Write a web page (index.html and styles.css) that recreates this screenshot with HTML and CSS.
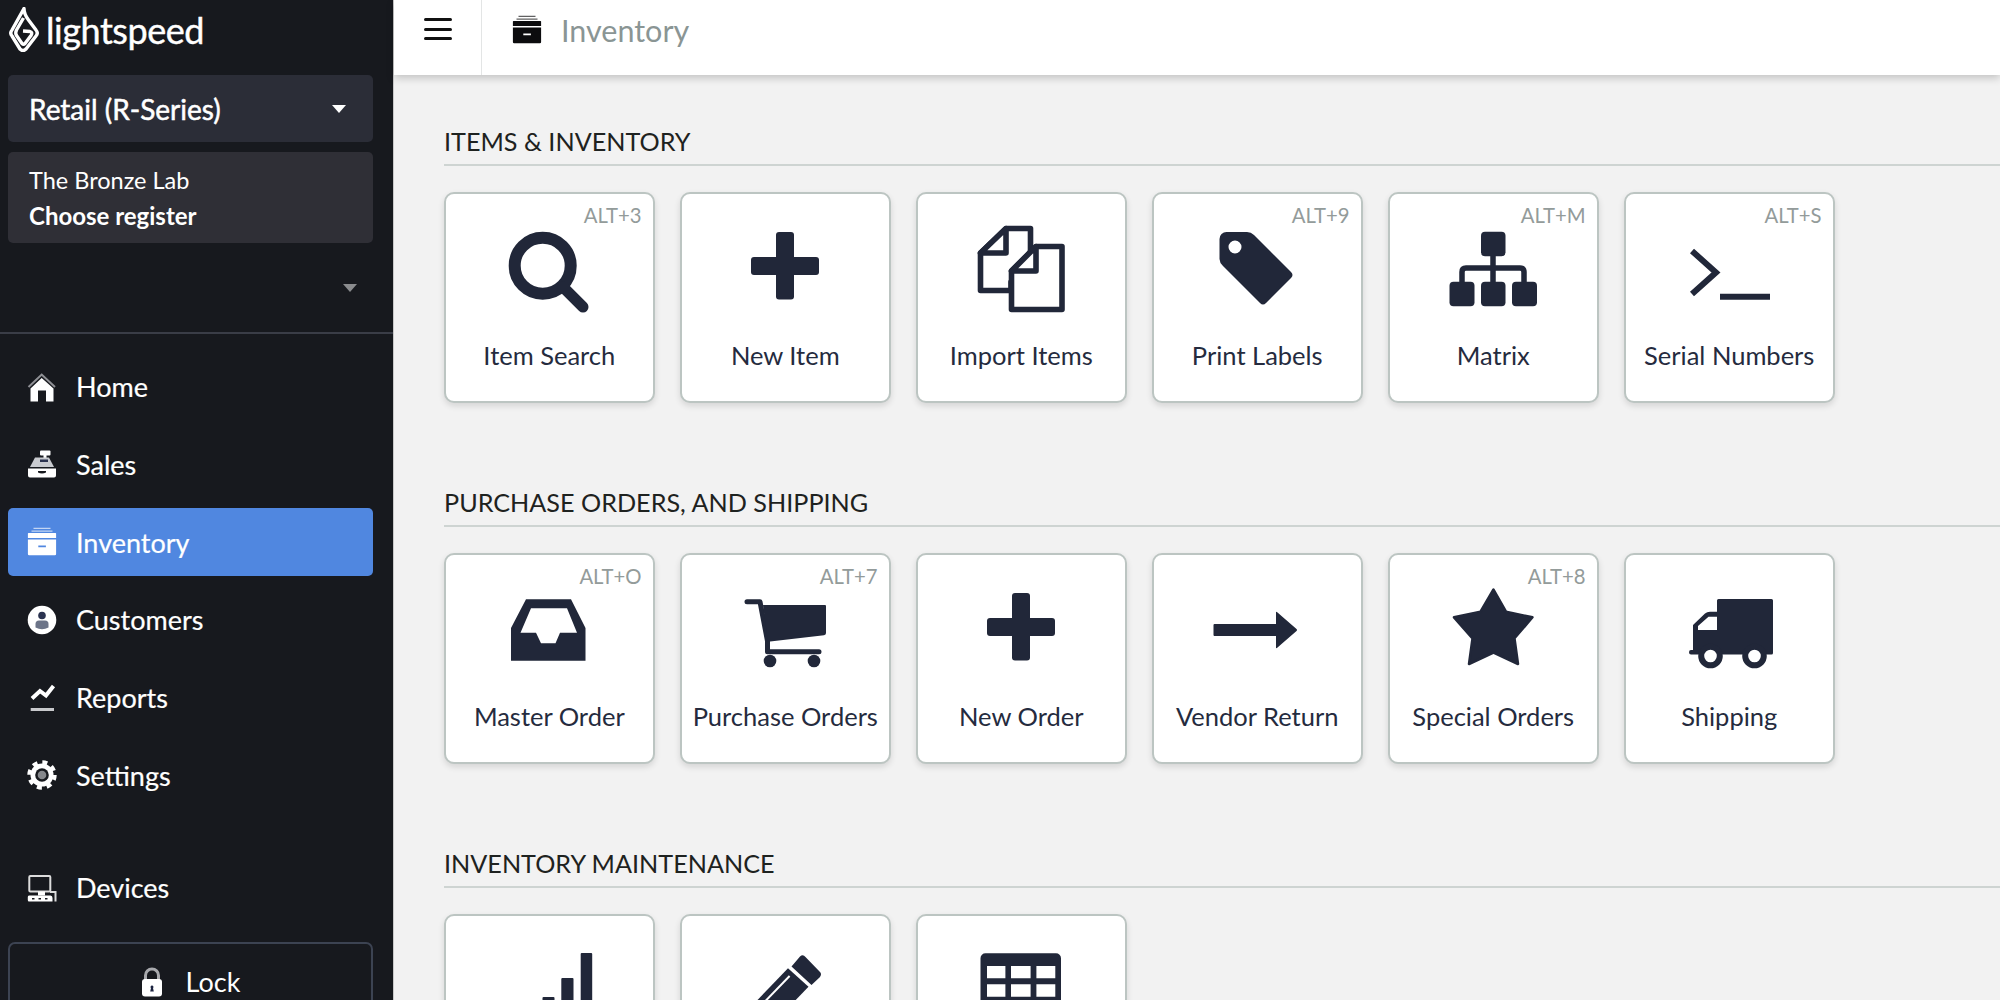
FILE: index.html
```html
<!DOCTYPE html>
<html lang="en">
<head>
    <meta charset="UTF-8">
    <title>Inventory</title>
    <link rel="stylesheet" href="styles.css">
</head>
<body>

<svg class="defs" width="0" height="0">
    <symbol id="i-box" viewBox="0 0 30 30">
        <path d="M6.5 .8h17v1.2h-17zM4.5 3.6h21v1.2h-21z" opacity=".65"/>
        <path d="M1.5 6h27a.6.6 0 0 1 .6.6V11H.9V6.6a.6.6 0 0 1 .6-.6z"/>
        <path fill-rule="evenodd" d="M.9 12.4h28.2v14.6a1.2 1.2 0 0 1-1.2 1.2H2.1A1.2 1.2 0 0 1 .9 27zM11.3 18.5v1.8h7.6v-1.8z"/>
    </symbol>
    <symbol id="i-plus" viewBox="0 0 100 100">
        <rect x="41" y="10" width="18" height="67.5" rx="3"/>
        <rect x="16" y="35" width="68" height="18" rx="3"/>
    </symbol>
</svg>

<div class="app">
    <aside class="sidebar">
        <div class="logo">
            <svg class="logo-mark" viewBox="0 0 30 45" width="30" height="45">
                <path class="logo-line" d="M15 1.500C15 6 16.500 9 19.500 13L27 23Q29.500 26 27 29L17 42Q14 45 11 42L3 29Q.5 26 3 23Z"/>
                <path class="logo-line" d="M14.500 11L7.500 23Q6 26 7.500 28.500L13 36.500Q14.500 38 16 36.500L22 28.500Q24 25.500 21 24.500L14 24"/>
            </svg>
            <span class="logo-text">lightspeed</span>
        </div>

        <div class="product-select">
            <span>Retail (R-Series)</span>
            <i class="caret"></i>
        </div>
        <div class="store-box">
            <div>The Bronze Lab</div>
            <div class="register">Choose register</div>
        </div>
        <div class="user-row"><i class="caret caret-dim"></i></div>

        <nav class="nav">
            <a class="nav-item">
                <svg class="nav-icon" viewBox="0 0 30 30">
                    <path d="M1.500 15L14.700 2.500L28 15" class="roof"/>
                    <path fill-rule="evenodd" d="M14.700 6L26.500 16.500V29.500H19V18.500H11V29.500H3.500V16.500Z"/>
                </svg>
                Home
            </a>
            <a class="nav-item">
                <svg class="nav-icon" viewBox="0 0 30 30">
                    <rect x="13" y="1.500" width="10.500" height="5" rx="1"/>
                    <rect x="16.500" y="6" width="3" height="3"/>
                    <path d="M8 8.500H22L27 18H3Z" fill="#c9cbd0"/>
                    <rect x="13" y="10.500" width="8" height="2.500" fill="#2b3350"/>
                    <path fill-rule="evenodd" d="M1 19.500H29V26.500Q29 28.500 27 28.500H3Q1 28.500 1 26.500ZM11 22V23.500Q15 25.500 19 23.500V22Z"/>
                </svg>
                Sales
            </a>
            <a class="nav-item active">
                <svg class="nav-icon"><use href="#i-box"/></svg>
                Inventory
            </a>
            <a class="nav-item">
                <svg class="nav-icon" viewBox="0 0 30 30">
                    <circle cx="15" cy="15" r="14.300"/>
                    <circle cx="15" cy="10.500" r="3.800" fill="#2b3350"/>
                    <path d="M8.500 22.500V19Q8.500 15.500 12 15.500H18Q21.500 15.500 21.500 19V22.500Q15 26 8.500 22.500Z" fill="#6c7488"/>
                </svg>
                Customers
            </a>
            <a class="nav-item">
                <svg class="nav-icon" viewBox="0 0 30 30">
                    <polyline class="nav-stroke" points="5,15.500 13,8 19,12.500 26.500,3"/>
                    <line x1="3.700" y1="26.500" x2="27" y2="26.500" class="nav-stroke baseline"/>
                </svg>
                Reports
            </a>
            <a class="nav-item">
                <svg class="nav-icon" viewBox="0 0 30 30">
                    <circle cx="15" cy="15" r="11.500"/>
                    <circle cx="15" cy="15" r="12.700" class="gear-teeth"/>
                    <circle cx="15" cy="15" r="6.800" fill="#17191e"/>
                    <circle cx="15" cy="15" r="4.300" fill="#85878b"/>
                </svg>
                Settings
            </a>
            <a class="nav-item nav-devices">
                <svg class="nav-icon" viewBox="0 0 30 30">
                    <rect x="2.300" y="3" width="21" height="15.500" rx="1" class="device-line"/>
                    <rect x="11" y="18.500" width="7" height="4"/>
                    <path fill-rule="evenodd" d="M2 22.500H23.500Q25.500 22.500 25.500 25V28.500H2Q.8 28.500 .8 27V24Q.8 22.500 2 22.500ZM5 25V26.500H7.500V25ZM11.500 25V26.500H14V25ZM18 25V26.500H20.500V25Z"/>
                    <path d="M23 19H28.500V28.500" class="device-line"/>
                </svg>
                Devices
            </a>
        </nav>

        <button class="lock">
            <svg class="lock-icon" viewBox="0 0 22 30" width="22" height="30">
                <path d="M4.500 14V8.500a6.500 6.500 0 0 1 13 0V14" class="shackle"/>
                <rect x="1" y="12" width="20" height="17.500" rx="3"/>
                <path d="M11 18.500a1.500 1.500 0 0 1 1 2.600l.8 3.400H9.200l.8-3.400a1.500 1.500 0 0 1 1-2.600z" fill="#1c2340"/>
            </svg>
            Lock
        </button>
    </aside>

    <div class="main">
        <header class="topbar">
            <button class="menu-btn">
                <span></span><span></span><span></span>
            </button>
            <div class="page-title">
                <svg class="title-icon"><use href="#i-box"/></svg>
                Inventory
            </div>
        </header>

        <div class="content">
            <section class="group">
                <h2>ITEMS &amp; INVENTORY</h2>
                <div class="cards">
                    <a class="card">
                        <span class="shortcut">ALT+3</span>
                        <svg class="card-icon" viewBox="0 0 100 100">
                            <circle cx="43.700" cy="43.700" r="28" class="line" stroke-width="12"/>
                            <line x1="64" y1="65" x2="84" y2="85" class="line round" stroke-width="11"/>
                        </svg>
                        <span class="card-label">Item Search</span>
                    </a>
                    <a class="card">
                        <svg class="card-icon"><use href="#i-plus"/></svg>
                        <span class="card-label">New Item</span>
                    </a>
                    <a class="card">
                        <svg class="card-icon" viewBox="0 0 100 100">
                            <path class="doc" d="M9.500 31L35 6.500H59.500V60H40V68.500H9.500Z"/>
                            <path class="doc fold" d="M9.500 31H35V6.500Z"/>
                            <path class="doc" d="M40.500 49L65 24.500H91V87.500H40.500Z"/>
                            <path class="doc fold" d="M40.500 49H65V24.500Z"/>
                        </svg>
                        <span class="card-label">Import Items</span>
                    </a>
                    <a class="card">
                        <span class="shortcut">ALT+9</span>
                        <svg class="card-icon" viewBox="0 0 100 100">
                            <path fill-rule="evenodd" d="M12.500 17a7 7 0 0 1 7-7H40q4 0 7 3L84 50q3 3 0 6L59 81q-3 3-6 0L16 44q-3.500-3.500-3.500-7ZM21.500 25a6.500 6.500 0 1 0 13 0a6.500 6.500 0 1 0-13 0Z"/>
                        </svg>
                        <span class="card-label">Print Labels</span>
                    </a>
                    <a class="card">
                        <span class="shortcut">ALT+M</span>
                        <svg class="card-icon" viewBox="0 0 100 100">
                            <rect x="38" y="9.700" width="24.500" height="24.500" rx="4"/>
                            <rect x="6.500" y="59.700" width="25" height="24.500" rx="4"/>
                            <rect x="38" y="59.700" width="24.500" height="24.500" rx="4"/>
                            <rect x="69" y="59.700" width="25" height="24.500" rx="4"/>
                            <path class="line" stroke-width="5.500" d="M19 60V50q0-4 4-4H77q4 0 4 4V60M50 34V60"/>
                        </svg>
                        <span class="card-label">Matrix</span>
                    </a>
                    <a class="card">
                        <span class="shortcut">ALT+S</span>
                        <svg class="card-icon" viewBox="0 0 100 100">
                            <polyline class="line" stroke-width="6" points="13,29 37,50.500 13,72"/>
                            <line x1="41" y1="74.700" x2="91" y2="74.700" class="line" stroke-width="6"/>
                        </svg>
                        <span class="card-label">Serial Numbers</span>
                    </a>
                </div>
            </section>

            <section class="group">
                <h2>PURCHASE ORDERS, AND SHIPPING</h2>
                <div class="cards">
                    <a class="card">
                        <span class="shortcut">ALT+O</span>
                        <svg class="card-icon" viewBox="0 0 100 100">
                            <path fill-rule="evenodd" d="M27 16.300H72L86.500 45V77.700H12V45ZM32 25.300L21.500 49.700H37L42 60.300H56.500L61 49.700H78L68 25.300Z"/>
                        </svg>
                        <span class="card-label">Master Order</span>
                    </a>
                    <a class="card">
                        <span class="shortcut">ALT+7</span>
                        <svg class="card-icon" viewBox="0 0 100 100">
                            <path class="line round" stroke-width="5" d="M12 18.700H25L32.500 58V68.700H84"/>
                            <path d="M28 22H90a1 1 0 0 1 1 1V50q0 2-2 2.300L33 58.700Z"/>
                            <circle cx="35" cy="78" r="6.300"/>
                            <circle cx="79" cy="78" r="6.300"/>
                        </svg>
                        <span class="card-label">Purchase Orders</span>
                    </a>
                    <a class="card">
                        <svg class="card-icon"><use href="#i-plus"/></svg>
                        <span class="card-label">New Order</span>
                    </a>
                    <a class="card">
                        <svg class="card-icon" viewBox="0 0 100 100">
                            <path d="M7.500 41H69V29.500Q69 28 70.500 29.500L89.500 46Q90.500 47 89.500 48L70.500 64.500Q69 66 69 64.500V53H7.500Q6.500 53 6.500 52V42Q6.500 41 7.500 41Z"/>
                        </svg>
                        <span class="card-label">Vendor Return</span>
                    </a>
                    <a class="card">
                        <span class="shortcut">ALT+8</span>
                        <svg class="card-icon" viewBox="0 0 100 100">
                            <path class="star" d="M50.500 6.500L63 28.700L89.500 34.300L71.500 55.300L75 81L50.500 69.700L26 81L29.500 55.300L11 34.300L37.500 28.700Z"/>
                        </svg>
                        <span class="card-label">Special Orders</span>
                    </a>
                    <a class="card">
                        <svg class="card-icon" viewBox="0 0 100 100">
                            <path fill-rule="evenodd" d="M39.500 16H92.500a1.500 1.500 0 0 1 1.500 1.500V70a1.500 1.500 0 0 1-1.500 1.500H12q-2 0-2-2.200T12 67H14V42L26 30.500Q28 28.700 31 28.700H38V17.500a1.500 1.500 0 0 1 1.500-1.500ZM38 33.700H29.500L19 43V47H38Z"/>
                            <circle cx="31.500" cy="73" r="9.300" class="wheel"/>
                            <circle cx="75.500" cy="73" r="9.300" class="wheel"/>
                        </svg>
                        <span class="card-label">Shipping</span>
                    </a>
                </div>
            </section>

            <section class="group">
                <h2>INVENTORY MAINTENANCE</h2>
                <div class="cards">
                    <a class="card">
                        <svg class="card-icon" viewBox="0 0 100 100">
                            <rect x="81.700" y="9" width="11.500" height="85" rx="1"/>
                            <rect x="62.300" y="34" width="12.200" height="60" rx="1"/>
                            <rect x="43.500" y="53" width="12" height="41" rx="1"/>
                        </svg>
                    </a>
                    <a class="card">
                        <svg class="card-icon" viewBox="0 0 100 100">
                            <path d="M65 12.500Q68 10 70.500 13L85 28Q87 30 85 33L76.500 41L56.500 22.500Z"/>
                            <path d="M53 24.300L73.500 42.700L30 88L8 92L11 68Z"/>
                            <line x1="54.600" y1="32" x2="15" y2="73" class="pencil-line"/>
                        </svg>
                    </a>
                    <a class="card">
                        <svg class="card-icon" viewBox="0 0 100 100">
                            <path fill-rule="evenodd" d="M14.500 9.300H85a5 5 0 0 1 5 5V73a5 5 0 0 1-5 5H14.500a5 5 0 0 1-5-5V14.300a5 5 0 0 1 5-5ZM16 22V34.300H34.400V22ZM40 22V34.300H59.600V22ZM65.400 22V34.300H84.300V22ZM16 40.300V52.700H34.400V40.300ZM40 40.300V52.700H59.600V40.300ZM65.400 40.300V52.700H84.300V40.300ZM16 58.700V71H34.400V58.700ZM40 58.700V71H59.600V58.700ZM65.400 58.700V71H84.300V58.700Z"/>
                        </svg>
                    </a>
                </div>
            </section>
        </div>
    </div>
</div>

</body>
</html>
```

FILE: styles.css
```css
* {
    box-sizing: border-box;
}
body {
    font-family: Lato, "Open Sans", sans-serif;
    margin: 0;
    background-color: #f2f2f2;
}
.defs {
    position: absolute;
}
.app {
    display: flex;
    height: 100vh;
    overflow: hidden;
}

/* sidebar */
.sidebar {
    width: 394px;
    flex-shrink: 0;
    padding: 0 20px 0 8px;
    background-color: #17191e;
    border-right: 1px solid #c9c9c9;
    color: #fff;
    fill: #fff;
}
.logo {
    display: flex;
    align-items: center;
    gap: 7px;
    height: 75px;
    padding: 0 0 16px 1px;
}
.logo-mark {
    flex-shrink: 0;
}
.logo-line {
    fill: none;
    stroke: #fff;
    stroke-width: 3.4;
    stroke-linejoin: round;
}
.logo-text {
    font-size: 36px;
    letter-spacing: -0.45px;
    -webkit-text-stroke: 0.4px #fff;
}
.product-select {
    display: flex;
    align-items: center;
    justify-content: space-between;
    height: 67px;
    padding: 0 27px 0 21px;
    background-color: #2b2d37;
    border-radius: 5px;
    font-size: 28px;
    -webkit-text-stroke: 0.5px #fff;
}
.caret {
    width: 0;
    height: 0;
    border-left: 7px solid transparent;
    border-right: 7px solid transparent;
    border-top: 8px solid #fff;
}
.caret-dim {
    border-top-color: #8a8b8e;
}
.store-box {
    height: 91px;
    margin-top: 10px;
    padding: 10px 21px 0;
    background-color: #2f2f36;
    border-radius: 5px;
    font-size: 23.5px;
    line-height: 36px;
}
.register {
    font-size: 24px;
    font-weight: 700;
}
.user-row {
    display: flex;
    justify-content: flex-end;
    align-items: center;
    height: 91px;
    margin: 0 -20px 0 -8px;
    padding: 0 36px 0 0;
    border-bottom: 2px solid #3a3d47;
}
.nav {
    display: flex;
    flex-direction: column;
    gap: 10.2px;
    padding-top: 19px;
}
.nav-item {
    display: flex;
    align-items: center;
    gap: 19px;
    height: 67.5px;
    padding-left: 19px;
    border-radius: 5px;
    font-size: 27px;
    -webkit-text-stroke: 0.2px #fff;
}
.nav-item.active {
    background-color: #5087e0;
}
.nav-devices {
    margin-top: 35px;
}
.nav-icon {
    width: 30px;
    height: 30px;
    flex-shrink: 0;
}
.roof {
    fill: none;
    stroke: #8f9095;
    stroke-width: 2;
}
.nav-stroke {
    fill: none;
    stroke: #fff;
    stroke-width: 4;
}
.baseline {
    stroke: #c8c9cc;
    stroke-width: 3;
}
.gear-teeth {
    fill: none;
    stroke: #fff;
    stroke-width: 4;
    stroke-dasharray: 5 4.970;
}
.device-line {
    fill: none;
    stroke: #dcdcdc;
    stroke-width: 2;
}
.lock {
    display: flex;
    align-items: center;
    justify-content: center;
    gap: 23px;
    width: 100%;
    height: 80px;
    margin-top: 20px;
    padding: 0;
    background: none;
    border: 2px solid #3c4352;
    border-radius: 7px;
    color: #fff;
    fill: #fff;
    font-family: inherit;
    font-size: 27px;
}
.shackle {
    fill: none;
    stroke: #a8a9ad;
    stroke-width: 3;
}

/* top bar */
.main {
    flex: 1;
    min-width: 0;
}
.topbar {
    display: flex;
    align-items: stretch;
    height: 75px;
    background-color: #fff;
    box-shadow: 0 3px 8px rgba(0, 0, 0, .2);
    position: relative;
}
.menu-btn {
    display: flex;
    flex-direction: column;
    justify-content: center;
    align-items: center;
    gap: 6.5px;
    width: 88px;
    padding: 0 0 17px;
    background: none;
    border: 0;
    border-right: 1px solid #e3e5e5;
}
.menu-btn span {
    width: 28px;
    height: 3px;
    border-radius: 2px;
    background-color: #111;
}
.page-title {
    display: flex;
    align-items: center;
    gap: 19px;
    padding: 0 0 16px 30px;
    color: #8a9594;
    font-size: 30.5px;
}
.title-icon {
    width: 30px;
    height: 30px;
    fill: #0c0c0e;
}

/* groups */
.content {
    padding: 51px 0 0 50px;
}
.group {
    margin-bottom: 84.5px;
}
.group h2 {
    margin: 0 0 25.5px;
    padding-bottom: 8px;
    border-bottom: 2px solid #ced4d2;
    color: #1e2220;
    font-size: 25.2px;
    font-weight: 400;
    line-height: 30px;
}
.cards {
    display: flex;
    gap: 25.4px;
}
.card {
    position: relative;
    display: flex;
    flex-direction: column;
    align-items: center;
    width: 210.6px;
    height: 211px;
    padding-top: 28.5px;
    background-color: #fff;
    border: 2px solid #bcc5c2;
    border-radius: 10px;
    box-shadow: 0 3px 6px rgba(0, 0, 0, .12);
}
.shortcut {
    position: absolute;
    top: 8.5px;
    right: 11px;
    color: #939b9a;
    font-size: 20.3px;
    line-height: 26px;
}
.card-icon {
    width: 100px;
    height: 100px;
    flex-shrink: 0;
    fill: #212739;
}
.card-label {
    margin-top: 18px;
    color: #252b3e;
    font-size: 25.5px;
    line-height: 30px;
    white-space: nowrap;
}

/* icon strokes */
.line {
    fill: none;
    stroke: #212739;
}
.round {
    stroke-linecap: round;
    stroke-linejoin: round;
}
.doc {
    fill: #fff;
    stroke: #212739;
    stroke-width: 5.6;
    stroke-linejoin: round;
}
.fold {
    fill: #fff;
}
.star {
    stroke: #212739;
    stroke-width: 2.5;
    stroke-linejoin: round;
}
.wheel {
    fill: #fff;
    stroke: #212739;
    stroke-width: 6;
}
.pencil-line {
    stroke: #fff;
    stroke-width: 2;
}
```
